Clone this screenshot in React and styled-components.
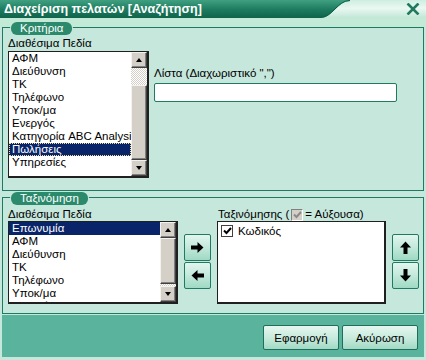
import React from 'react'
import styled, { createGlobalStyle } from 'styled-components'

const GlobalStyle = createGlobalStyle`
  html, body {
    margin: 0;
    padding: 0;
    background: #c6e7dc;
  }
  * { box-sizing: border-box; }
`

const Window = styled.div`
  width: 426px;
  height: 360px;
  background: #c6e7dc;
  display: flex;
  flex-direction: column;
  font-family: "Liberation Sans", Arial, sans-serif;
  font-size: 11.5px;
  color: #000;
  overflow: hidden;
`

const TitleBar = styled.div`
  height: 18px;
  display: flex;
  background: linear-gradient(#3fa080, #1c7a5e 55%, #0e644a);
`

const TitleText = styled.div`
  flex: 1;
  color: #fff;
  font-weight: bold;
  font-size: 12.5px;
  line-height: 18px;
  padding-left: 4px;
  white-space: nowrap;
`

const Curve = styled.svg`
  width: 30px;
  height: 18px;
  display: block;
`

const TitleCap = styled.div`
  width: 76px;
  height: 18px;
  background: linear-gradient(#cdeee1, #eaf8f2 45%, #c0e7d6);
  display: flex;
  align-items: center;
  justify-content: flex-end;
  padding-right: 6px;
`

const Content = styled.div`
  flex: 1;
  display: flex;
  flex-direction: column;
  padding: 9px 2px 3px 2px;
  background: linear-gradient(#c2ead6 0, #c2ead6 9px, #c6e7dc 9px);
`

const Group = styled.div`
  position: relative;
  height: ${p => p.$h}px;
  margin-top: ${p => p.$mt || 0}px;
  border: 1px solid #1e7a60;
  padding: ${p => p.$pt}px 5px 0 5px;
`

const Tab = styled.div`
  position: absolute;
  top: -6px;
  left: 8px;
  height: 13px;
  padding: 0 9px;
  border-radius: 6px;
  background: #2b8a6c;
  color: #fff;
  font-size: 11.5px;
  line-height: 13px;
  box-shadow: 0 0 0 1px #c6e7dc;
`

const CriteriaGrid = styled.div`
  display: grid;
  grid-template-columns: 141px 1fr;
  column-gap: 5px;
`

const SortGrid = styled.div`
  display: grid;
  grid-template-columns: 170px 27px 169px 27px;
  grid-template-rows: 13px 83px;
  column-gap: 6px;
  & > :nth-child(3) { margin-left: 1px; }
`

const Label = styled.div`
  line-height: 13px;
  height: 13px;
  white-space: nowrap;
  margin-top: ${p => p.$mt || 0}px;
  display: flex;
  align-items: center;
  gap: 2px;
`

const Column = styled.div`
  display: flex;
  flex-direction: column;
`

const ListBox = styled.div`
  height: ${p => p.$h}px;
  margin-top: ${p => p.$mt || 0}px;
  background: #fff;
  border: 1px solid #202020;
  border-right-width: 2px;
  border-bottom-width: 2px;
  display: flex;
  overflow: hidden;
`

const Items = styled.div`
  flex: 1;
  min-width: 0;
  overflow: hidden;
`

const Item = styled.div`
  height: 13px;
  line-height: 13px;
  padding-left: 3px;
  white-space: nowrap;
  overflow: hidden;
  background: ${p => (p.$sel ? '#0a246a' : 'transparent')};
  color: ${p => (p.$sel ? '#fff' : '#000')};
  outline: ${p => (p.$focus ? '1px dotted #f0e090' : 'none')};
  outline-offset: -1px;
`

const ScrollBar = styled.div`
  width: 16px;
  display: flex;
  flex-direction: column;
  background: #d4d0c8;
`

const ScrollBtn = styled.div`
  width: 16px;
  height: ${p => p.$h || 16}px;
  background: #d4d0c8;
  border-top: 1px solid #f4f2ee;
  border-left: 1px solid #f4f2ee;
  border-right: 1px solid #404040;
  border-bottom: 1px solid #404040;
  box-shadow: inset -1px -1px 0 #808080;
  display: flex;
  align-items: center;
  justify-content: center;
`

const Track = styled.div`
  height: ${p => p.$h}px;
  flex: ${p => (p.$grow ? 1 : 'none')};
  background: repeating-conic-gradient(#d4d0c8 0 25%, #ffffff 0 50%) 0 0 / 2px 2px;
`

const Arrow = styled.div`
  width: 0;
  height: 0;
  border-left: 3.5px solid transparent;
  border-right: 3.5px solid transparent;
  ${p => (p.$dir === 'up'
    ? 'border-bottom: 4px solid #000;'
    : 'border-top: 4px solid #000;')}
`

const TextInput = styled.div`
  width: 243px;
  height: 19px;
  margin-top: 3px;
  background: #fff;
  border: 1px solid #1e7a60;
  border-radius: 2px;
`

const BtnStack = styled.div`
  display: flex;
  flex-direction: column;
  gap: 1px;
  margin-top: 13px;
`

const IconButton = styled.div`
  width: 27px;
  height: 27px;
  border: 1px solid #1e7a60;
  border-radius: 2px;
  background: linear-gradient(#e2f5ee, #c6eadd 45%, #9fd9c4);
  display: flex;
  align-items: center;
  justify-content: center;
`

const CheckBox = styled.span`
  width: 12px;
  height: 12px;
  display: inline-flex;
  align-items: center;
  justify-content: center;
  background: ${p => (p.$gray ? '#d4d0c8' : '#fff')};
  border: 1px solid ${p => (p.$gray ? '#808080' : '#404040')};
  border-right-color: ${p => (p.$gray ? '#fff' : '#404040')};
  border-bottom-color: ${p => (p.$gray ? '#fff' : '#404040')};
`

const CheckRow = styled.div`
  display: flex;
  align-items: center;
  gap: 5px;
  height: 15px;
  padding: 3px 0 0 3px;
`

const Footer = styled.div`
  flex: 1;
  margin-top: 1px;
  background: #5ab39c;
  display: flex;
  justify-content: flex-end;
  align-items: flex-start;
  gap: 3px;
  padding: 10px 6px 0 0;
`

const Button = styled.div`
  width: 76px;
  height: 25px;
  border: 1px solid #1e6e58;
  border-radius: 2px;
  background: linear-gradient(#e6f6f0, #c9ebde 50%, #a2d9c4);
  display: flex;
  align-items: center;
  justify-content: center;
  font-size: 11.5px;
`

const Check = ({ color = '#000' }) => (
  <svg width="9" height="8" viewBox="0 0 9 8">
    <path d="M1 3.5 L3.5 6 L8 1" fill="none" stroke={color} strokeWidth="2" />
  </svg>
)

const BlockArrow = ({ rotate }) => (
  <svg width="13" height="11" viewBox="0 0 13 11" style={{ transform: `rotate(${rotate}deg)` }}>
    <path d="M0 3.5 H6.5 V0 L12.5 5.5 L6.5 11 V7.5 H0 Z" fill="#000" />
  </svg>
)

const Scroll = ({ parts }) => (
  <ScrollBar>
    <ScrollBtn><Arrow $dir="up" /></ScrollBtn>
    {parts.map((p, i) =>
      p.type === 'track'
        ? <Track key={i} $h={p.h} $grow={p.grow} />
        : <ScrollBtn key={i} $h={p.h} />
    )}
    <ScrollBtn><Arrow $dir="down" /></ScrollBtn>
  </ScrollBar>
)

const criteriaFields = ['ΑΦΜ', 'Διεύθυνση', 'ΤΚ', 'Τηλέφωνο', 'Υποκ/μα', 'Ενεργός', 'Κατηγορία ABC Analysis', 'Πωλήσεις', 'Υπηρεσίες']
const sortFields = ['Επωνυμία', 'ΑΦΜ', 'Διεύθυνση', 'ΤΚ', 'Τηλέφωνο', 'Υποκ/μα', 'Ενεργός']

export default function App() {
  return (
    <Window>
      <GlobalStyle />
      <TitleBar>
        <TitleText>Διαχείριση πελατών [Αναζήτηση]</TitleText>
        <Curve viewBox="0 0 30 18">
          <defs>
            <linearGradient id="cap" x1="0" y1="0" x2="0" y2="1">
              <stop offset="0" stopColor="#cdeee1" />
              <stop offset="0.45" stopColor="#eaf8f2" />
              <stop offset="1" stopColor="#c0e7d6" />
            </linearGradient>
          </defs>
          <path d="M0 18 C 13 18, 17 1, 30 1 L30 18 Z" fill="url(#cap)" />
          <path d="M0 17.5 C 13 17.5, 17 0.5, 30 0.5" fill="none" stroke="#0e5f47" strokeWidth="1" />
        </Curve>
        <TitleCap>
          <svg width="14" height="12" viewBox="0 0 14 12">
            <path d="M1.5 0.5 L12.5 11.5 M12.5 0.5 L1.5 11.5" stroke="#217a60" strokeWidth="2.6" />
          </svg>
        </TitleCap>
      </TitleBar>
      <Content>
        <Group $h={164} $pt={9}>
          <Tab>Κριτήρια</Tab>
          <CriteriaGrid>
            <Column>
              <Label>Διαθέσιμα Πεδία</Label>
              <ListBox $h={127} $mt={1}>
                <Items>
                  {criteriaFields.map(f => (
                    <Item key={f} $sel={f === 'Πωλήσεις'} $focus={f === 'Πωλήσεις'}>{f}</Item>
                  ))}
                </Items>
                <Scroll parts={[{ type: 'track', h: 17 }, { type: 'thumb', h: 75 }]} />
              </ListBox>
            </Column>
            <Column>
              <Label $mt={30}>Λίστα (Διαχωριστικό ",")</Label>
              <TextInput />
            </Column>
          </CriteriaGrid>
        </Group>
        <Group $h={117} $mt={6} $pt={10}>
          <Tab>Ταξινόμηση</Tab>
          <SortGrid>
            <Label>Διαθέσιμα Πεδία</Label>
            <span />
            <Label>
              Ταξινόμησης (<CheckBox $gray><Check color="#8a8a8a" /></CheckBox> = Αύξουσα)
            </Label>
            <span />
            <ListBox $h={83}>
              <Items>
                {sortFields.map((f, i) => (
                  <Item key={f + i} $sel={i === 0}>{f}</Item>
                ))}
              </Items>
              <Scroll parts={[{ type: 'thumb', h: 46 }, { type: 'track', grow: true }]} />
            </ListBox>
            <BtnStack>
              <IconButton><BlockArrow rotate={0} /></IconButton>
              <IconButton><BlockArrow rotate={180} /></IconButton>
            </BtnStack>
            <ListBox $h={83}>
              <Items>
                <CheckRow>
                  <CheckBox><Check /></CheckBox>
                  Κωδικός
                </CheckRow>
              </Items>
            </ListBox>
            <BtnStack>
              <IconButton><BlockArrow rotate={-90} /></IconButton>
              <IconButton><BlockArrow rotate={90} /></IconButton>
            </BtnStack>
          </SortGrid>
        </Group>
        <Footer>
          <Button>Εφαρμογή</Button>
          <Button>Ακύρωση</Button>
        </Footer>
      </Content>
    </Window>
  )
}
